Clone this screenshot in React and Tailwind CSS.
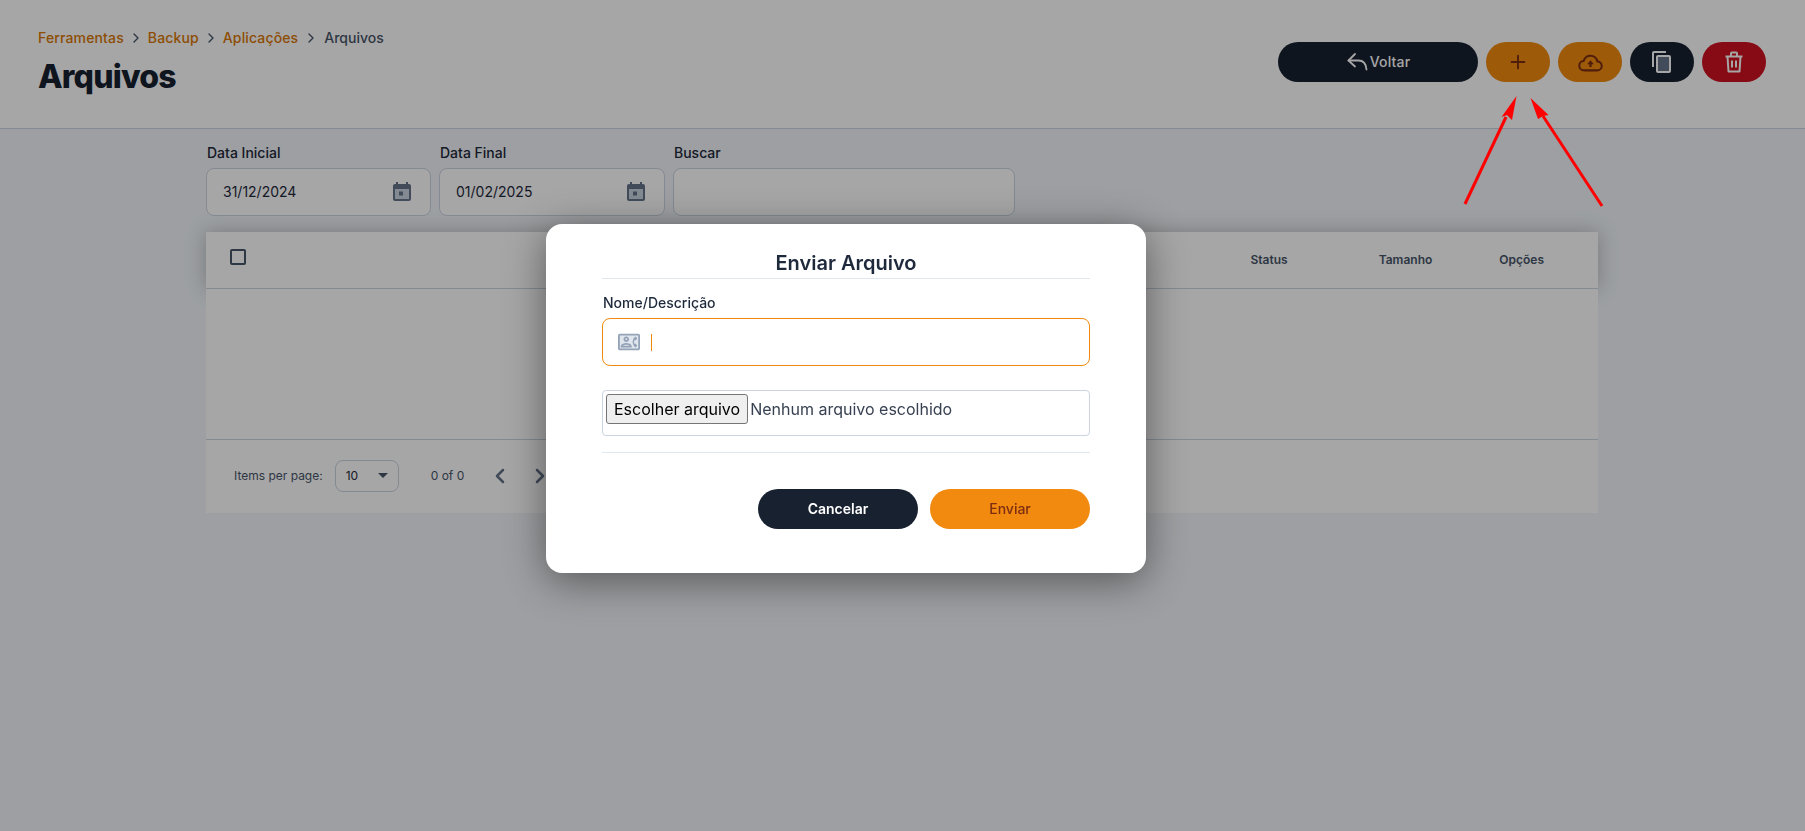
import React from "react";
import { Plus, ChevronRight, ChevronLeft } from "lucide-react";
import { MdOutlineContactPhone } from "react-icons/md";

const Crumb = ({ children }) => <span className="tracking-[0.01em] text-[#d97706]">{children}</span>;
const Sep = ({ className = "mx-[4px]" }) => <ChevronRight className={`h-4 w-4 text-[#475569] ${className}`} strokeWidth={2} />;

const CalendarIcon = () => (
  <svg viewBox="0 0 24 24" className="h-6 w-6" aria-hidden="true">
    <path d="M5 9h14v10H5z" fill="#cbd5e1" />
    <path fill="#64748b" d="M19 4h-1V2h-2v2H8V2H6v2H5c-1.100 0-2 .9-2 2v13c0 1.100.9 2 2 2h14c1.100 0 2-.9 2-2V6c0-1.100-.9-2-2-2zm0 15H5V9h14v10zM9 11.500h4v4H9z" />
  </svg>
);

const ReplyIcon = () => (
  <svg viewBox="0 0 24 24" className="h-6 w-6" fill="none" stroke="currentColor" strokeWidth="1.800" strokeLinecap="round" strokeLinejoin="round" aria-hidden="true">
    <path d="M9 4 2.500 10.500 9 16.500" />
    <path d="M2.500 10.500h10c4.500 0 7.500 3 8 9" />
  </svg>
);

const CloudIcon = () => (
  <svg viewBox="0 0 24 24" className="h-[27px] w-[27px]" fill="none" stroke="#7c2d12" strokeWidth="1.800" aria-hidden="true">
    <path d="M6.500 19C3.900 19 2 17.200 2 14.800c0-2.200 1.700-4 3.900-4.200C6.800 8 9.200 6 12 6c3 0 5.500 2.100 6 5 2.200.1 4 1.800 4 4 0 2.300-1.800 4-4 4z" />
    <path d="M12 10 15 13.500h-2v2.500h-2v-2.500H9z" fill="#7c2d12" stroke="none" />
  </svg>
);

const CopyIcon = () => (
  <svg viewBox="0 0 24 24" className="h-6 w-6" aria-hidden="true">
    <path d="M8 7h11v14H8z" fill="#64748b" />
    <path fill="#fff" d="M16 1H4c-1.100 0-2 .9-2 2v14h2V3h12V1zm3 4H8c-1.100 0-2 .9-2 2v14c0 1.100.9 2 2 2h11c1.100 0 2-.9 2-2V7c0-1.100-.9-2-2-2zm0 16H8V7h11v14z" />
  </svg>
);

const TrashIcon = () => (
  <svg viewBox="0 0 24 24" className="h-6 w-6" fill="none" stroke="#fff" strokeWidth="2" strokeLinejoin="round" aria-hidden="true">
    <path d="M3.500 6.500h17" />
    <path d="M9 6V3.500a1 1 0 0 1 1-1h4a1 1 0 0 1 1 1V6" />
    <path d="M5.500 6.500 6.500 21.500h11l1-15" />
    <path d="M10 10.500v7M14 10.500v7" />
  </svg>
);

const HeaderButton = ({ className, children }) => (
  <button className={`flex h-10 items-center justify-center rounded-full ${className}`}>{children}</button>
);

const DateField = ({ label, value, width }) => (
  <div className={`flex flex-col ${width}`}>
    <label className="mb-[5px] pl-[1px] text-sm font-medium leading-5 text-[#1e293b]">{label}</label>
    <div className="flex h-12 items-center justify-between rounded-lg border border-[#cbd5e1] bg-white pl-4 pr-4 text-sm text-[#1e293b]">
      <span>{value}</span>
      {value && <CalendarIcon />}
    </div>
  </div>
);

export default function App() {
  return (
    <div className="relative h-[831px] w-full overflow-hidden bg-[#f1f5f9] font-['Inter',sans-serif]">
      <header className="flex h-[129px] justify-between border-b border-[#cbd5e1] bg-white pl-[38px] pr-[39px]">
        <div className="pt-[28px]">
          <nav className="flex h-5 items-center text-sm font-medium leading-5">
            <Crumb>Ferramentas</Crumb>
            <Sep />
            <Crumb>Backup</Crumb>
            <Sep />
            <Crumb>Aplicações</Crumb>
            <Sep className="mx-[5px]" />
            <span className="text-[#475569]">Arquivos</span>
          </nav>
          <h1 className="mt-[9px] text-[32px] font-extrabold leading-10 tracking-[-0.025em] text-[#182130]">Arquivos</h1>
        </div>
        <div className="flex gap-2 pt-[42px]">
          <HeaderButton className="w-[200px] bg-[#182130] text-sm font-medium tracking-[0.01em] text-white">
            <ReplyIcon />
            <span>Voltar</span>
          </HeaderButton>
          <HeaderButton className="w-16 bg-[#f18a0e] text-[#7c2d12]">
            <Plus className="h-[22px] w-[22px]" strokeWidth={2} />
          </HeaderButton>
          <HeaderButton className="w-16 bg-[#f18a0e]">
            <CloudIcon />
          </HeaderButton>
          <HeaderButton className="w-16 bg-[#182130]">
            <CopyIcon />
          </HeaderButton>
          <HeaderButton className="w-16 bg-[#ce1120]">
            <TrashIcon />
          </HeaderButton>
        </div>
      </header>

      <main className="ml-[206px] w-[1392px]">
        <div className="flex gap-2 pt-[14px]">
          <DateField label="Data Inicial" value="31/12/2024" width="w-[225px]" />
          <DateField label="Data Final" value="01/02/2025" width="w-[226px]" />
          <DateField label="Buscar" value="" width="w-[342px]" />
        </div>

        <div className="mt-4 bg-white">
          <div className="flex h-[57px] items-center justify-end border-b border-[#cbd5e1] bg-white pl-6 pr-[54px] text-xs font-semibold text-[#475569] shadow-[0_0_20px_rgba(0,0,0,0.25)]">
            <div className="mr-auto -mt-[7px] h-[16px] w-[16px] rounded-[2px] border-2 border-[#475569]" />
            <span>Status</span>
            <span className="ml-[91px]">Tamanho</span>
            <span className="ml-[67px]">Opções</span>
          </div>
          <div className="relative h-[151px] border-b border-[#cbd5e1] bg-white" />
          <div className="flex h-[73px] items-center pb-[2px] pl-7 text-xs text-[#475569]">
            <span>Items per page:</span>
            <div className="ml-3 flex h-8 w-16 items-center justify-between rounded-lg border border-[#cbd5e1] pl-[10px] pr-[10px] text-[#1e293b]">
              <span>10</span>
              <span className="h-0 w-0 border-x-[5px] border-t-[5px] border-x-transparent border-t-[#475569]" />
            </div>
            <span className="ml-8">0 of 0</span>
            <ChevronLeft className="ml-[24px] h-6 w-6 text-[#64748b]" strokeWidth={2.5} />
            <ChevronRight className="ml-4 h-6 w-6 text-[#64748b]" strokeWidth={2.5} />
          </div>
        </div>
      </main>

      <div className="fixed inset-0 bg-black/35" />

      <svg className="absolute left-[1450px] top-[90px] h-[130px] w-[170px]" viewBox="1450 90 170 130" aria-hidden="true">
        <path d="M1465 204 1506 117" stroke="#ff0000" strokeWidth="3" />
        <path d="M1516.500 96 1512 120 1507 115 1501.500 117z" fill="#ff0000" />
        <path d="M1602 206 1543 116" stroke="#ff0000" strokeWidth="3" />
        <path d="M1530.500 98 1548.500 115 1543 116 1538 119z" fill="#ff0000" />
      </svg>

      <div className="absolute left-[546px] top-[224px] flex h-[349px] w-[600px] flex-col rounded-2xl bg-white px-[56px] pt-[24px] shadow-[0_8px_40px_rgba(0,0,0,0.45)]">
        <h2 className="h-[31px] border-b border-[#e2e8f0] pt-[1px] text-center text-xl font-semibold leading-7 text-[#1e293b]">Enviar Arquivo</h2>
        <label className="mt-[14px] pl-[1px] text-sm font-medium leading-5 text-[#1e293b]">Nome/Descrição</label>
        <div className="mt-[5px] flex h-12 items-center rounded-lg border border-[#f18a0e] pl-4">
          <span className="relative flex h-[15px] w-[19px] items-center justify-center bg-[#cbd5e1]/60 text-[#94a3b8]">
            <MdOutlineContactPhone className="h-[22px] w-[22px] shrink-0" />
          </span>
          <span className="ml-[13px] h-[17px] w-[1px] bg-[#f18a0e]" />
        </div>
        <div className="mt-[24px] flex h-[46px] items-start rounded-[4px] border border-[#cbd5e1] pl-[3px] pt-[3px] text-base leading-[30px] text-[#374151]">
          <button className="h-[30px] rounded-[3px] border border-[#767676] bg-[#efefef] px-[7px] text-base leading-[26px] text-black">Escolher arquivo</button>
          <span className="ml-[2px]">Nenhum arquivo escolhido</span>
        </div>
        <div className="mt-4 border-b border-[#e2e8f0]" />
        <div className="mt-[36px] flex justify-end gap-3">
          <button className="h-10 w-40 rounded-full bg-[#182130] text-sm font-semibold text-white">Cancelar</button>
          <button className="h-10 w-40 rounded-full bg-[#f18a0e] text-sm font-medium text-[#7c2d12]">Enviar</button>
        </div>
      </div>
    </div>
  );
}
